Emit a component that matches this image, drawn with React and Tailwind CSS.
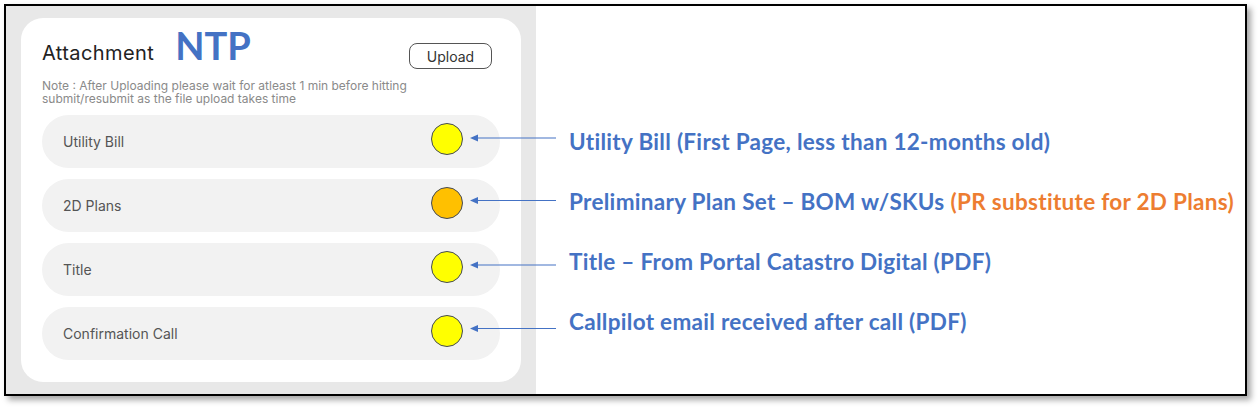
const rows = [
  { label: "Utility Bill", color: "bg-[#ffff00]" },
  { label: "2D Plans", color: "bg-[#ffc000]" },
  { label: "Title", color: "bg-[#ffff00]" },
  { label: "Confirmation Call", color: "bg-[#ffff00]" },
];

const notes = [
  { text: "Utility Bill (First Page, less than 12-months old)" },
  { text: "Preliminary Plan Set \u2013 BOM w/SKUs", extra: "(PR substitute for 2D Plans)" },
  { text: "Title \u2013 From Portal Catastro Digital (PDF)" },
  { text: "Callpilot email received after call (PDF)" },
];

// y of each pointer arrow (drawn over both panels)
const arrowYs = [138, 200.5, 265, 328.5];

function Arrows() {
  return (
    <svg className="absolute left-0 top-0 pointer-events-none" width="1260" height="410">
      {arrowYs.map((y) => (
        <g key={y}>
          <line x1="476" y1={y} x2="556" y2={y} stroke="#4472c4" strokeWidth="1.2" />
          <path d={`M470 ${y} L478 ${y - 3.5} L478 ${y + 3.5} Z`} fill="#4472c4" />
        </g>
      ))}
    </svg>
  );
}

export default function App() {
  return (
    <div className="relative w-[1260px] h-[410px] bg-white">
      <div className="absolute left-[4px] top-[4px] w-[1243px] h-[392px] border-2 border-black bg-white flex shadow-[4px_4px_6px_rgba(0,0,0,0.35)]">

        {/* Left panel */}
        <div className="w-[530px] h-full bg-[#e8e8e8] px-[15px] py-[12px]">
          <div className="h-full bg-white rounded-[22px] px-[21px] pt-[4px] font-['Inter',sans-serif]">

            {/* Header */}
            <div className="flex items-start justify-between">
              <div className="flex items-baseline">
                <span className="text-[20px] text-[#222] tracking-[0.4px]">Attachment</span>
                <span className="ml-[21px] text-[38px] leading-[46px] font-bold text-[#4472c4] font-['Lato',sans-serif]">NTP</span>
              </div>
              <button className="mt-[21px] mr-[8px] w-[83px] h-[26px] rounded-[8px] border-[1.5px] border-[#555] text-[14px] text-[#333] flex items-center justify-center">
                Upload
              </button>
            </div>

            {/* Note */}
            <p className="mt-[10px] text-[12px] leading-[13px] text-[#8a8a8a]">
              Note : After Uploading please wait for atleast 1 min before hitting
              <br />
              submit/resubmit as the file upload takes time
            </p>

            {/* Rows */}
            <div className="mt-[10px] flex flex-col gap-[11px]">
              {rows.map((r) => (
                <div key={r.label} className="h-[53px] rounded-full bg-[#f2f2f2] pl-[21px] pr-[37px] flex items-center justify-between">
                  <span className="text-[14px] text-[#555]">{r.label}</span>
                  <div className={`w-[32px] h-[32px] mb-[6px] rounded-full border-[1.5px] border-[#444a58] ${r.color}`}></div>
                </div>
              ))}
            </div>
          </div>
        </div>

        {/* Right panel */}
        <div className="flex-1 pl-[33px] pt-[106px] font-['Lato',sans-serif] font-bold text-[22.5px] leading-[60px] tracking-[0.3px] text-[#4472c4]">
          {notes.map((n) => (
            <div key={n.text} className="whitespace-nowrap">
              {n.text}
              {n.extra && <span className="ml-[6px] text-[#ed7d31]">{n.extra}</span>}
            </div>
          ))}
        </div>
      </div>

      <Arrows />
    </div>
  );
}
